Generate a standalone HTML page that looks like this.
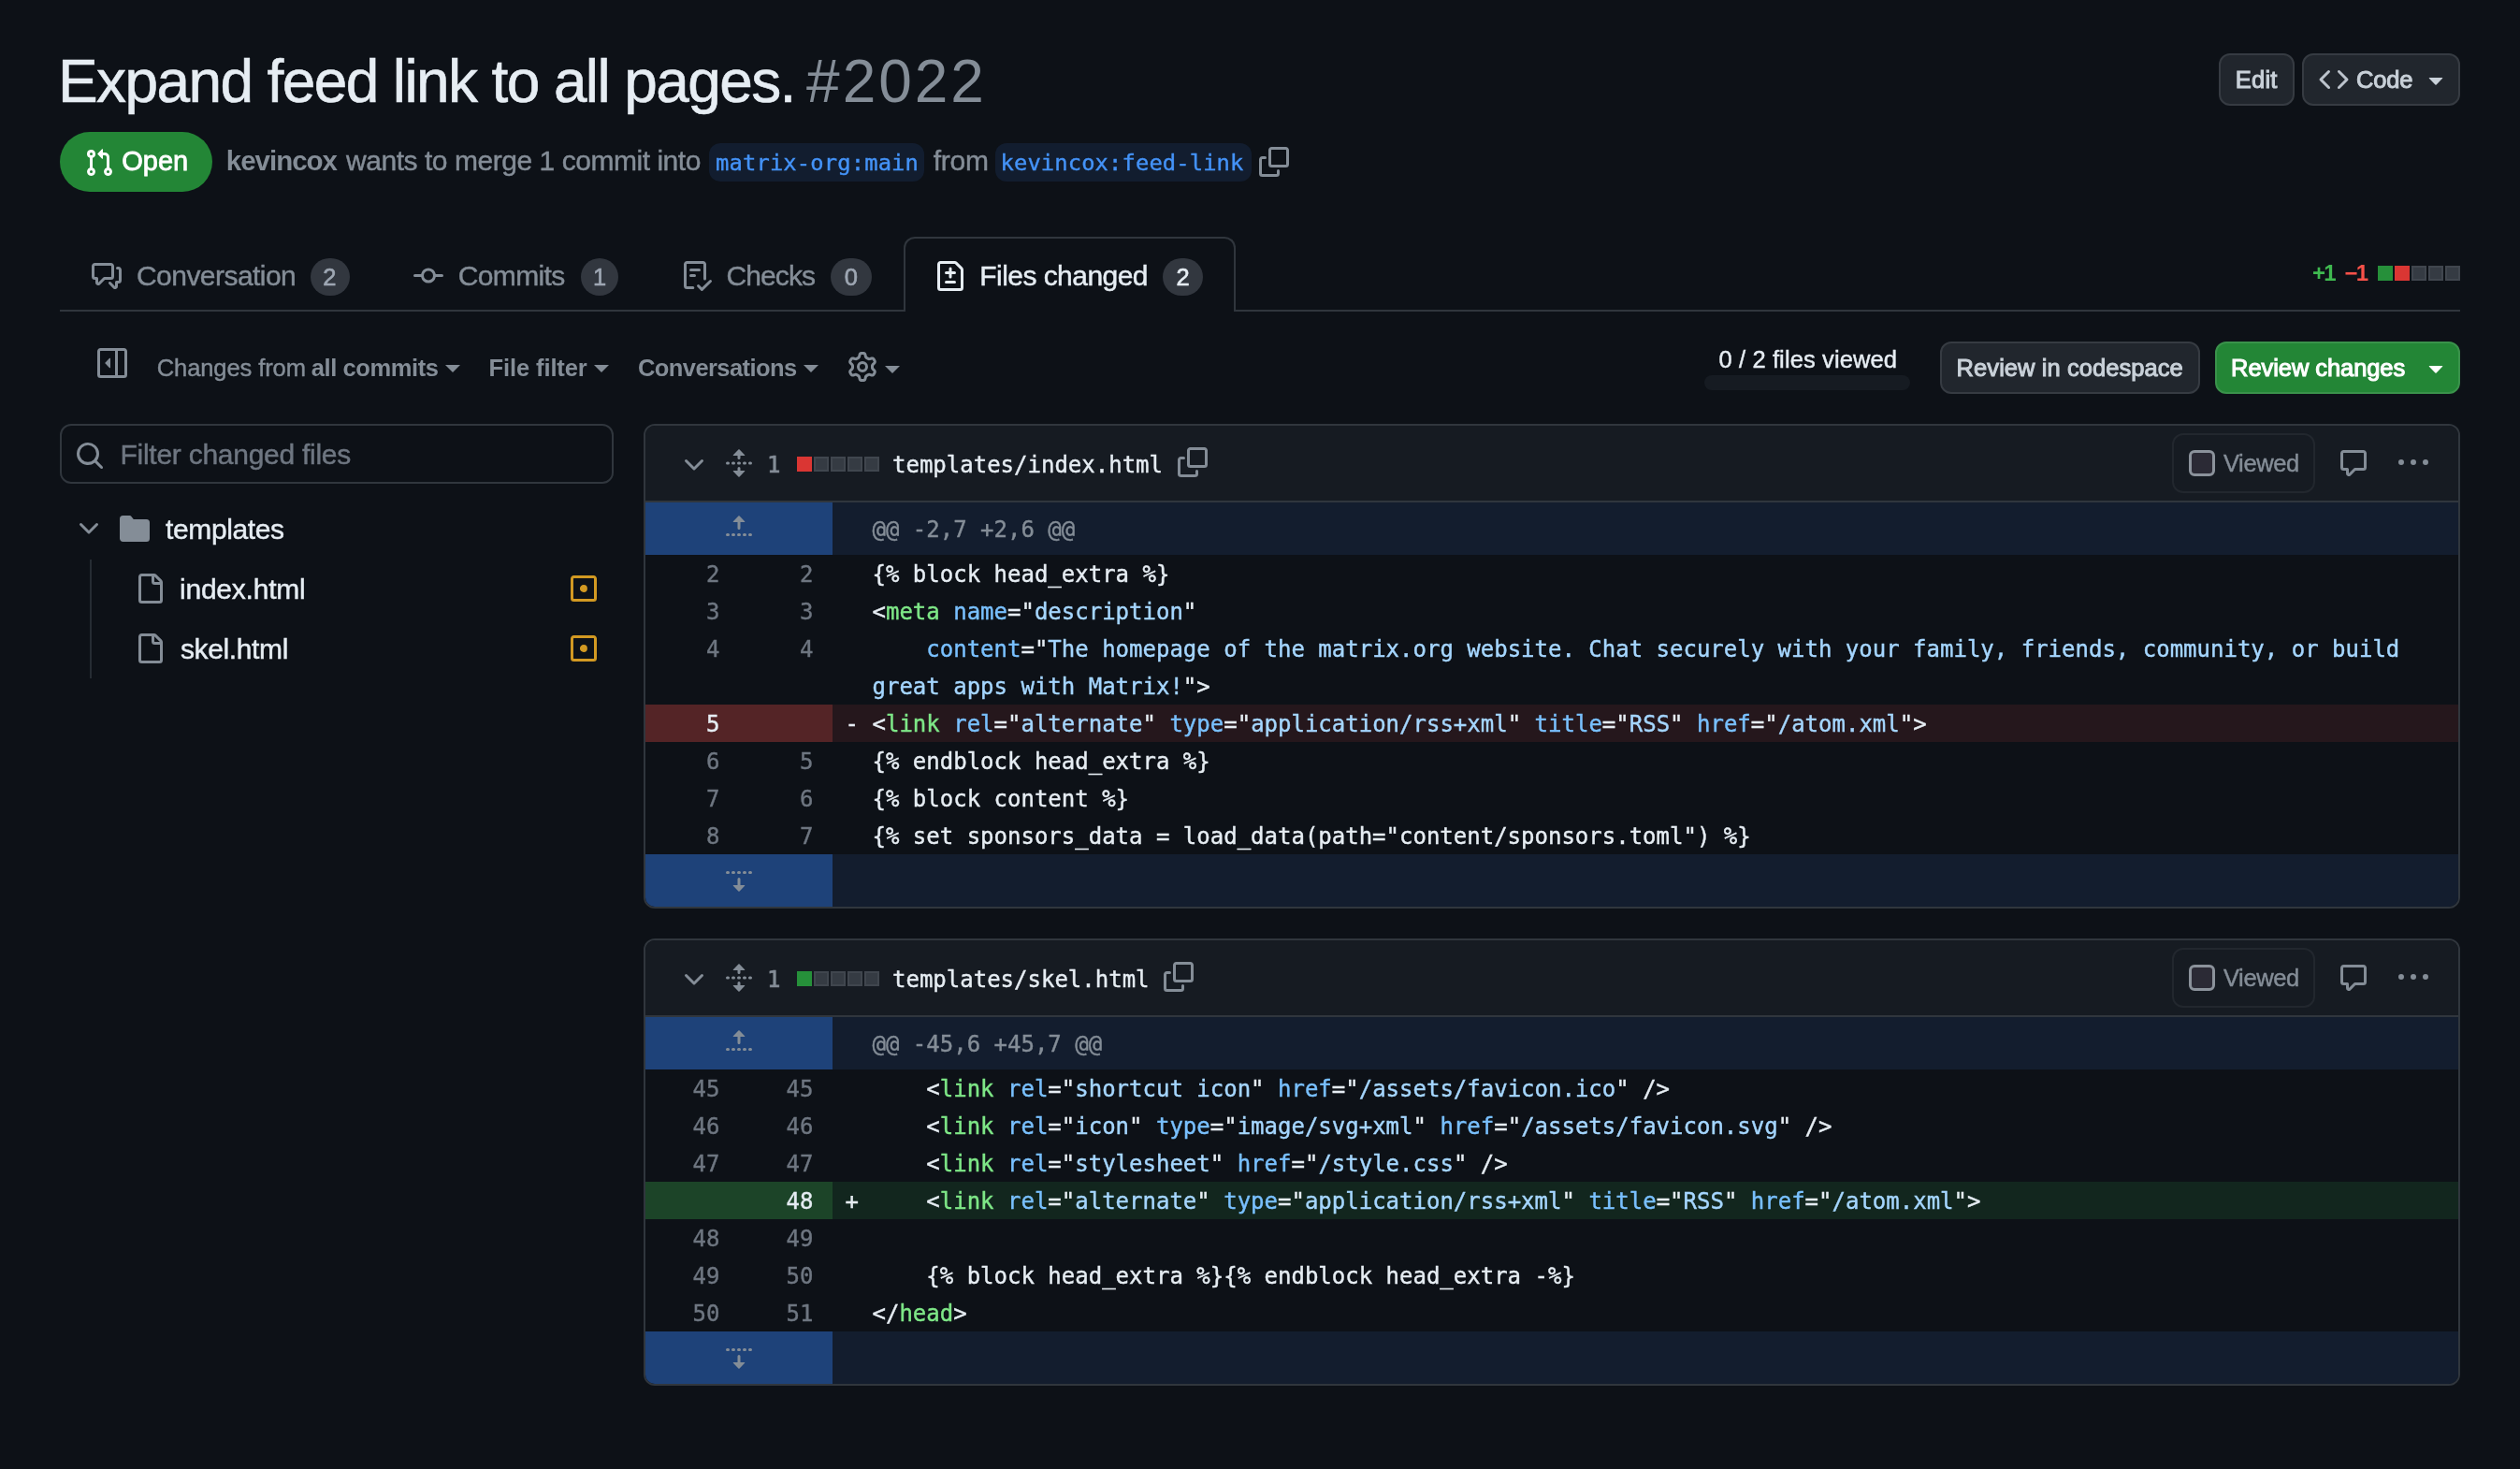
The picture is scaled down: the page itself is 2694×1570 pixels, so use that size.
<!DOCTYPE html>
<html lang="en"><head><meta charset="utf-8"><title>Expand feed link to all pages. #2022</title>
<style>
*{box-sizing:border-box;margin:0;padding:0}
html,body{background:#0d1117;width:2694px;height:1570px;overflow:hidden}
body{font-family:"Liberation Sans",sans-serif;color:#e6edf3}
#root{zoom:2;position:relative;width:1347px;height:785px;overflow:hidden;font-size:14px;line-height:20px;will-change:transform}
.abs{position:absolute}
.tx{position:absolute;white-space:pre;line-height:20px}
.oc{display:block;overflow:visible;flex:none}
.ic{position:absolute;display:block}
.mono{font-family:"DejaVu Sans Mono","Liberation Mono",monospace}
h1{font-weight:400;font-size:inherit}
.btn{position:absolute;height:28px;border:1px solid #363b42;border-radius:6px;background:#21262d}
.btn.green{background:#238636;border-color:#3a924b}
.state{left:32px;top:70.6px;width:81.5px;height:32px;border-radius:16px;background:#238636}
.branch{position:absolute;height:20.6px;background:#121d2f;border-radius:6px}
.tabs{left:32px;top:126.5px;width:1283px;height:40px;box-shadow:inset 0 -1px 0 #30363d}
.tabsel{position:absolute;top:0;height:40px;border:1px solid #30363d;border-bottom:0;border-radius:6px 6px 0 0;background:#0d1117}
.tabsel:after{content:'';position:absolute;left:0;right:0;bottom:-1px;height:1px;background:#0d1117}
.counter{position:absolute;height:20px;border-radius:10px;background:#32373f}
.caret{position:absolute;width:0;height:0;border:4px solid transparent;border-top-color:#848d97;border-bottom-width:0}
.filter{left:32.1px;top:226.5px;width:296px;height:32px;border:1px solid #30363d;border-radius:6px;background:#0d1117}
.file{position:absolute;left:343.75px;width:971.25px;border:1px solid #30363d;border-radius:6px;background:#0d1117;overflow:hidden}
.fh{height:41px;background:#161b22;border-bottom:1px solid #30363d;position:relative}
.fn{position:absolute;font-size:12px;line-height:20px;white-space:pre}
.row{position:relative;height:20px;font-size:12px;line-height:20px;white-space:pre;-webkit-text-stroke:0.2px}
.row.h2{height:40px}
.row.hunk{height:28px;line-height:28px;background:#131d2e}
.row.hunk .nums{position:absolute;left:0;top:0;width:100px;height:100%;background:#1e4279}
.row.hunk .txt{color:#848d97}
.n1,.n2{position:absolute;top:0;width:50px;height:100%;padding-right:10px;padding-top:.5px;text-align:right;color:#6e7681}
.n1{left:0}.n2{left:50px}
.txt{position:absolute;left:121.5px;top:0.5px;color:#e6edf3}
.mk{position:absolute;left:107px;top:0.5px;color:#e6edf3}
.row.del{background:#25171c}.row.del .n1,.row.del .n2{background:#542426;color:#e6edf3}
.row.add{background:#12261e}.row.add .n1,.row.add .n2{background:#1c4428;color:#e6edf3}
.t{color:#7ee787}.a{color:#79c0ff}.s{color:#a5d6ff}
.ds{position:absolute;width:8px;height:8px;background:#353b43;border:1px solid #40464e}
.ds.g{background:#26903a;border:0}.ds.r{background:#da3633;border:0}
</style></head>
<body><div id="root">
<header>
<h1><span class="tx" id="title" style="left:31.00px;top:21.29px;font-size:32px;font-weight:400;color:#e6edf3;letter-spacing:-0.807px;line-height:44px;-webkit-text-stroke:0.3px #e6edf3;">Expand feed link to all pages.</span> <span class="tx" id="tnum" style="left:431.05px;top:21.29px;font-size:32px;font-weight:400;color:#848d97;letter-spacing:1.475px;line-height:44px;-webkit-text-stroke:0.01px #848d97;">#2022</span></h1>
<div class="btn" style="left:1186.2px;top:28.55px;width:40.2px"></div>
<span class="tx" id="b_edit" style="left:1194.90px;top:32.58px;font-size:12.75px;font-weight:400;color:#c9d1d9;letter-spacing:0.100px;-webkit-text-stroke:0.5px #c9d1d9;">Edit</span>
<div class="btn" style="left:1230.65px;top:28.55px;width:84.35px"></div>
<span class="ic" style="left:1239.5px;top:34.7px"><svg class="oc" width="16" height="16" viewBox="0 0 16 16" fill="#bcc3cc" ><path d="m11.28 3.22 4.25 4.25a.75.75 0 0 1 0 1.06l-4.25 4.25a.749.749 0 0 1-1.275-.326.749.749 0 0 1 .215-.734L13.94 8l-3.72-3.72a.749.749 0 0 1 .326-1.275.749.749 0 0 1 .734.215Zm-6.56 0a.751.751 0 0 1 1.042.018.751.751 0 0 1 .018 1.042L2.06 8l3.72 3.72a.749.749 0 0 1-.326 1.275.749.749 0 0 1-.734-.215L.47 8.53a.75.75 0 0 1 0-1.06Z"/></svg></span>
<span class="tx" id="b_code" style="left:1259.50px;top:32.58px;font-size:12.75px;font-weight:400;color:#c9d1d9;letter-spacing:-0.100px;-webkit-text-stroke:0.5px #c9d1d9;">Code</span>
<span class="ic" style="left:1293.8px;top:34.45px"><svg class="oc" width="16" height="16" viewBox="0 0 16 16" fill="#c9d1d9" ><path d="m4.427 7.427 3.396 3.396a.25.25 0 0 0 .354 0l3.396-3.396A.25.25 0 0 0 11.396 7H4.604a.25.25 0 0 0-.177.427Z"/></svg></span>
<div class="abs state"></div>
<span class="ic" style="left:45px;top:78.9px"><svg class="oc" width="16" height="16" viewBox="0 0 16 16" fill="#fff" ><path d="M1.5 3.25a2.25 2.25 0 1 1 3 2.122v5.256a2.251 2.251 0 1 1-1.5 0V5.372A2.25 2.25 0 0 1 1.5 3.25Zm5.677-.177L9.573.677A.25.25 0 0 1 10 .854V2.5h1A2.5 2.5 0 0 1 13.5 5v5.628a2.251 2.251 0 1 1-1.5 0V5a1 1 0 0 0-1-1h-1v1.646a.25.25 0 0 1-.427.177L7.177 3.427a.25.25 0 0 1 0-.354ZM3.75 2.5a.75.75 0 1 0 0 1.5.75.75 0 0 0 0-1.5Zm0 9.5a.75.75 0 1 0 0 1.5.75.75 0 0 0 0-1.5Zm8.25.75a.75.75 0 1 0 1.5 0 .75.75 0 0 0-1.5 0Z"/></svg></span>
<span class="tx" id="s_open" style="left:65.12px;top:75.98px;font-size:14.5px;font-weight:400;color:#fff;letter-spacing:0.000px;-webkit-text-stroke:0.4px #fff;">Open</span>
<span class="tx" id="m_user" style="left:120.88px;top:76.14px;font-size:14.75px;font-weight:700;color:#848d97;letter-spacing:-0.500px;">kevincox</span>
<span class="tx" id="m_w" style="left:185.00px;top:76.05px;font-size:15px;font-weight:400;color:#848d97;letter-spacing:-0.230px;-webkit-text-stroke:0.22px #848d97;">wants to merge 1 commit into</span>
<span class="branch" style="left:379.1px;top:76.5px;width:115px"></span>
<span class="tx mono" id="br1" style="left:382.50px;top:77.03px;font-size:11.9px;font-weight:400;color:#4493f8;letter-spacing:0.071px;-webkit-text-stroke:0.2px #4493f8;">matrix-org:main</span>
<span class="tx" id="m_from" style="left:498.90px;top:76.05px;font-size:15px;font-weight:400;color:#848d97;letter-spacing:-0.133px;-webkit-text-stroke:0.22px #848d97;">from</span>
<span class="branch" style="left:531.85px;top:76.5px;width:137px"></span>
<span class="tx mono" id="br2" style="left:534.75px;top:77.03px;font-size:11.9px;font-weight:400;color:#4493f8;letter-spacing:0.059px;-webkit-text-stroke:0.2px #4493f8;">kevincox:feed-link</span>
<span class="ic" style="left:672.85px;top:78.3px"><svg class="oc" width="16" height="16" viewBox="0 0 16 16" fill="#848d97" ><path d="M0 6.75C0 5.784.784 5 1.75 5h1.5a.75.75 0 0 1 0 1.5h-1.5a.25.25 0 0 0-.25.25v7.5c0 .138.112.25.25.25h7.5a.25.25 0 0 0 .25-.25v-1.5a.75.75 0 0 1 1.5 0v1.5A1.75 1.75 0 0 1 9.25 16h-7.5A1.75 1.75 0 0 1 0 14.25ZM5 1.75C5 .784 5.784 0 6.75 0h7.5C15.216 0 16 .784 16 1.75v7.5A1.75 1.75 0 0 1 14.25 11h-7.5A1.75 1.75 0 0 1 5 9.25Zm1.75-.25a.25.25 0 0 0-.25.25v7.5c0 .138.112.25.25.25h7.5a.25.25 0 0 0 .25-.25v-7.5a.25.25 0 0 0-.25-.25Z"/></svg></span>
</header>
<nav>
<div class="abs tabs"><div class="tabsel" style="left:451px;width:177.25px"></div></div>
<span class="ic" style="left:49px;top:139.5px"><svg class="oc" width="16" height="16" viewBox="0 0 16 16" fill="#848d97" ><path d="M1.75 1h8.5c.966 0 1.75.784 1.75 1.75v5.5A1.75 1.75 0 0 1 10.25 10H7.061l-2.574 2.573A1.458 1.458 0 0 1 2 11.543V10h-.25A1.75 1.75 0 0 1 0 8.25v-5.5C0 1.784.784 1 1.75 1ZM1.5 2.75v5.5c0 .138.112.25.25.25h1a.75.75 0 0 1 .75.75v2.19l2.72-2.72a.749.749 0 0 1 .53-.22h3.5a.25.25 0 0 0 .25-.25v-5.5a.25.25 0 0 0-.25-.25h-8.5a.25.25 0 0 0-.25.25Zm13 2a.25.25 0 0 0-.25-.25h-.5a.75.75 0 0 1 0-1.5h.5c.966 0 1.75.784 1.75 1.75v5.5A1.75 1.75 0 0 1 14.25 12H14v1.543a1.458 1.458 0 0 1-2.487 1.03L9.22 12.28a.749.749 0 0 1 .326-1.275.749.749 0 0 1 .734.215l2.22 2.22v-2.19a.75.75 0 0 1 .75-.75h1a.25.25 0 0 0 .25-.25Z"/></svg></span>
<span class="tx" id="tab1" style="left:73.00px;top:137.45px;font-size:15px;font-weight:400;color:#848d97;letter-spacing:-0.273px;-webkit-text-stroke:0.22px #848d97;">Conversation</span>
<span class="counter" style="left:166.1px;top:138px;width:20.85px"></span>
<span class="tx" id="c1" style="left:172.65px;top:137.78px;font-size:12.75px;font-weight:400;color:#9ea7b3;letter-spacing:0.000px;-webkit-text-stroke:0.3px #9ea7b3;">2</span>
<span class="ic" style="left:221px;top:139.5px"><svg class="oc" width="16" height="16" viewBox="0 0 16 16" fill="#848d97" ><path d="M11.93 8.5a4.002 4.002 0 0 1-7.86 0H.75a.75.75 0 0 1 0-1.5h3.32a4.002 4.002 0 0 1 7.86 0h3.32a.75.75 0 0 1 0 1.5Zm-1.43-.75a2.5 2.5 0 1 0-5 0 2.5 2.5 0 0 0 5 0Z"/></svg></span>
<span class="tx" id="tab2" style="left:244.90px;top:137.45px;font-size:15px;font-weight:400;color:#848d97;letter-spacing:-0.333px;-webkit-text-stroke:0.22px #848d97;">Commits</span>
<span class="counter" style="left:310.3px;top:138px;width:20.1px"></span>
<span class="tx" id="c2" style="left:317.00px;top:137.78px;font-size:12.75px;font-weight:400;color:#9ea7b3;letter-spacing:0.000px;-webkit-text-stroke:0.3px #9ea7b3;">1</span>
<span class="ic" style="left:364.4px;top:139.5px"><svg class="oc" width="16" height="16" viewBox="0 0 16 16" fill="#848d97" ><path d="M2.5 1.75v11.5c0 .138.112.25.25.25h3.17a.75.75 0 0 1 0 1.5H2.75A1.75 1.75 0 0 1 1 13.25V1.75C1 .784 1.784 0 2.75 0h8.5C12.216 0 13 .784 13 1.75v7.736a.75.75 0 0 1-1.5 0V1.75a.25.25 0 0 0-.25-.25h-8.5a.25.25 0 0 0-.25.25Zm13.274 9.537v-.001l-4.557 4.45a.75.75 0 0 1-1.055-.008l-1.943-1.95a.75.75 0 0 1 1.062-1.058l1.419 1.425 4.026-3.932a.75.75 0 1 1 1.048 1.074ZM4.75 4h4.5a.75.75 0 0 1 0 1.5h-4.5a.75.75 0 0 1 0-1.5ZM4 7.75A.75.75 0 0 1 4.75 7h2a.75.75 0 0 1 0 1.5h-2A.75.75 0 0 1 4 7.75Z"/></svg></span>
<span class="tx" id="tab3" style="left:388.30px;top:137.45px;font-size:15px;font-weight:400;color:#848d97;letter-spacing:-0.460px;-webkit-text-stroke:0.22px #848d97;">Checks</span>
<span class="counter" style="left:444.15px;top:138px;width:21.8px"></span>
<span class="tx" id="c3" style="left:451.40px;top:137.78px;font-size:12.75px;font-weight:400;color:#9ea7b3;letter-spacing:0.000px;-webkit-text-stroke:0.3px #9ea7b3;">0</span>
<span class="ic" style="left:500.1px;top:139.5px"><svg class="oc" width="16" height="16" viewBox="0 0 16 16" fill="#e6edf3" ><path d="M1 1.75C1 .784 1.784 0 2.75 0h7.586c.464 0 .909.184 1.237.513l2.914 2.914c.329.328.513.773.513 1.237v9.586A1.75 1.75 0 0 1 13.25 16H2.75A1.75 1.75 0 0 1 1 14.25Zm1.75-.25a.25.25 0 0 0-.25.25v12.5c0 .138.112.25.25.25h10.5a.25.25 0 0 0 .25-.25V4.664a.25.25 0 0 0-.073-.177l-2.914-2.914a.25.25 0 0 0-.177-.073ZM8 3.25a.75.75 0 0 1 .75.75v1.5h1.5a.75.75 0 0 1 0 1.5h-1.5v1.5a.75.75 0 0 1-1.5 0V7h-1.5a.75.75 0 0 1 0-1.5h1.5V4A.75.75 0 0 1 8 3.25Zm-3 8a.75.75 0 0 1 .75-.75h4.5a.75.75 0 0 1 0 1.5h-4.5a.75.75 0 0 1-.75-.75Z"/></svg></span>
<span class="tx" id="tab4" style="left:523.65px;top:137.45px;font-size:15px;font-weight:400;color:#e6edf3;letter-spacing:-0.275px;-webkit-text-stroke:0.22px #e6edf3;">Files changed</span>
<span class="counter" style="left:621.5px;top:138px;width:21.3px"></span>
<span class="tx" id="c4" style="left:628.70px;top:137.78px;font-size:12.75px;font-weight:400;color:#e6edf3;letter-spacing:0.000px;-webkit-text-stroke:0.3px #e6edf3;">2</span>
<span class="tx" id="ds_p" style="left:1235.95px;top:135.94px;font-size:12px;font-weight:700;color:#3fb950;letter-spacing:-0.800px;">+1</span>
<span class="tx" id="ds_m" style="left:1253.30px;top:135.94px;font-size:12px;font-weight:700;color:#f85149;letter-spacing:-0.900px;">−1</span>
<span class="ds g" style="left:1271px;top:142px"></span><span class="ds r" style="left:1280px;top:142px"></span><span class="ds " style="left:1289px;top:142px"></span><span class="ds " style="left:1298px;top:142px"></span><span class="ds " style="left:1307px;top:142px"></span>
</nav>
<section class="toolbar">
<span class="ic" style="left:52px;top:186px"><svg class="oc" width="16" height="16" viewBox="0 0 16 16" fill="#848d97" ><path d="m4.177 7.823 2.396-2.396A.25.25 0 0 1 7 5.604v4.792a.25.25 0 0 1-.427.177L4.177 8.177a.25.25 0 0 1 0-.354ZM0 1.75C0 .784.784 0 1.75 0h12.5C15.216 0 16 .784 16 1.75v12.5A1.75 1.75 0 0 1 14.25 16H1.75A1.75 1.75 0 0 1 0 14.25Zm1.75-.25a.25.25 0 0 0-.25.25v12.5c0 .138.112.25.25.25H9.5v-13Zm12.5 13a.25.25 0 0 0 .25-.25V1.75a.25.25 0 0 0-.25-.25H11v13Z"/></svg></span>
<span class="tx" id="tb1a" style="left:83.88px;top:186.58px;font-size:12.75px;font-weight:400;color:#848d97;letter-spacing:-0.045px;-webkit-text-stroke:0.22px #848d97;">Changes from</span>
<span class="tx" id="tb1b" style="left:166.38px;top:186.58px;font-size:12.75px;font-weight:700;color:#848d97;letter-spacing:-0.200px;">all commits</span>
<span class="caret" style="left:238.1px;top:195px;border-top-color:#848d97"></span>
<span class="tx" id="tb2" style="left:261.25px;top:186.58px;font-size:12.75px;font-weight:700;color:#848d97;letter-spacing:-0.050px;">File filter</span>
<span class="caret" style="left:317.5px;top:195px;border-top-color:#848d97"></span>
<span class="tx" id="tb3" style="left:341.00px;top:186.58px;font-size:12.75px;font-weight:700;color:#848d97;letter-spacing:-0.292px;">Conversations</span>
<span class="caret" style="left:429.3px;top:195px;border-top-color:#848d97"></span>
<span class="ic" style="left:453px;top:188px"><svg class="oc" width="16" height="16" viewBox="0 0 16 16" fill="#848d97" ><path d="M8 0a8.2 8.2 0 0 1 .701.031C9.444.095 9.99.645 10.16 1.29l.288 1.107c.018.066.079.158.212.224.231.114.454.243.668.386.123.082.233.09.299.071l1.103-.303c.644-.176 1.392.021 1.82.63.27.385.506.792.704 1.218.315.675.111 1.422-.364 1.891l-.814.806c-.049.048-.098.147-.088.294.016.257.016.515 0 .772-.01.147.038.246.088.294l.814.806c.475.469.679 1.216.364 1.891a7.977 7.977 0 0 1-.704 1.217c-.428.61-1.176.807-1.82.63l-1.102-.302c-.067-.019-.177-.011-.3.071a5.909 5.909 0 0 1-.668.386c-.133.066-.194.158-.211.224l-.29 1.106c-.168.646-.715 1.196-1.458 1.26a8.006 8.006 0 0 1-1.402 0c-.743-.064-1.289-.614-1.458-1.26l-.289-1.106c-.018-.066-.079-.158-.212-.224a5.738 5.738 0 0 1-.668-.386c-.123-.082-.233-.09-.299-.071l-1.103.303c-.644.176-1.392-.021-1.82-.63a8.12 8.12 0 0 1-.704-1.218c-.315-.675-.111-1.422.363-1.891l.815-.806c.05-.048.098-.147.088-.294a6.214 6.214 0 0 1 0-.772c.01-.147-.038-.246-.088-.294l-.815-.806C.635 6.045.431 5.298.746 4.623a7.92 7.92 0 0 1 .704-1.217c.428-.61 1.176-.807 1.82-.63l1.102.302c.067.019.177.011.3-.071.214-.143.437-.272.668-.386.133-.066.194-.158.211-.224l.29-1.106C6.009.645 6.556.095 7.299.03 7.53.01 7.764 0 8 0Zm-.571 1.525c-.036.003-.108.036-.137.146l-.289 1.105c-.147.561-.549.967-.998 1.189-.173.086-.34.183-.5.29-.417.278-.97.423-1.529.27l-1.103-.303c-.109-.03-.175.016-.195.045-.22.312-.412.644-.573.99-.014.031-.021.11.059.19l.815.806c.411.406.562.957.53 1.456a4.709 4.709 0 0 0 0 .582c.032.499-.119 1.05-.53 1.456l-.815.806c-.081.08-.073.159-.059.19.162.346.353.677.573.989.02.03.085.076.195.046l1.102-.303c.56-.153 1.113-.008 1.53.27.161.107.328.204.501.29.447.222.85.629.997 1.189l.289 1.105c.029.109.101.143.137.146a6.6 6.6 0 0 0 1.142 0c.036-.003.108-.036.137-.146l.289-1.105c.147-.561.549-.967.998-1.189.173-.086.34-.183.5-.29.417-.278.97-.423 1.529-.27l1.103.303c.109.029.175-.016.195-.045.22-.313.411-.644.573-.99.014-.031.021-.11-.059-.19l-.815-.806c-.411-.406-.562-.957-.53-1.456a4.709 4.709 0 0 0 0-.582c-.032-.499.119-1.05.53-1.456l.815-.806c.081-.08.073-.159.059-.19a6.464 6.464 0 0 0-.573-.989c-.02-.03-.085-.076-.195-.046l-1.102.303c-.56.153-1.113.008-1.53-.27a4.44 4.44 0 0 0-.501-.29c-.447-.222-.85-.629-.997-1.189l-.289-1.105c-.029-.11-.101-.143-.137-.146a6.6 6.6 0 0 0-1.142 0ZM11 8a3 3 0 1 1-6 0 3 3 0 0 1 6 0ZM9.5 8a1.5 1.5 0 1 0-3.001.001A1.5 1.5 0 0 0 9.5 8Z"/></svg></span>
<span class="caret" style="left:472.8px;top:195.7px;border-top-color:#848d97"></span>
<span class="tx" id="fv" style="left:918.75px;top:181.93px;font-size:12.75px;font-weight:400;color:#e6edf3;letter-spacing:0.059px;-webkit-text-stroke:0.22px #e6edf3;">0 / 2 files viewed</span>
<div class="abs" style="left:911.1px;top:200.6px;width:109.7px;height:7.7px;border-radius:4px;background:#161b22"></div>
<div class="btn" style="left:1037px;top:182.7px;width:138.9px;height:27.6px"></div>
<span class="tx" id="b_rc" style="left:1045.80px;top:186.53px;font-size:12.75px;font-weight:400;color:#c9d1d9;letter-spacing:0.033px;-webkit-text-stroke:0.5px #c9d1d9;">Review in codespace</span>
<div class="btn green" style="left:1183.75px;top:182.7px;width:131.25px;height:27.6px"></div>
<span class="tx" id="b_rv" style="left:1192.55px;top:186.53px;font-size:12.75px;font-weight:400;color:#fff;letter-spacing:-0.038px;-webkit-text-stroke:0.55px #fff;">Review changes</span>
<span class="ic" style="left:1294px;top:188.7px"><svg class="oc" width="16" height="16" viewBox="0 0 16 16" fill="#fff" ><path d="m4.427 7.427 3.396 3.396a.25.25 0 0 0 .354 0l3.396-3.396A.25.25 0 0 0 11.396 7H4.604a.25.25 0 0 0-.177.427Z"/></svg></span>
</section>
<aside>
<div class="abs filter"></div>
<span class="ic" style="left:40px;top:235.5px"><svg class="oc" width="16" height="16" viewBox="0 0 16 16" fill="#848d97" ><path d="M10.68 11.74a6 6 0 0 1-7.922-8.982 6 6 0 0 1 8.982 7.922l3.04 3.04a.749.749 0 0 1-.326 1.275.749.749 0 0 1-.734-.215ZM11.5 7a4.499 4.499 0 1 0-8.997 0A4.499 4.499 0 0 0 11.5 7Z"/></svg></span>
<span class="tx" id="flt" style="left:64.25px;top:232.93px;font-size:15px;font-weight:400;color:#6e7681;letter-spacing:-0.132px;-webkit-text-stroke:0.22px #6e7681;">Filter changed files</span>
<span class="ic" style="left:39.65px;top:274.5px"><svg class="oc" width="16" height="16" viewBox="0 0 16 16" fill="#848d97" ><path d="M12.78 5.22a.749.749 0 0 1 0 1.06l-4.25 4.25a.749.749 0 0 1-1.06 0L3.22 6.28a.749.749 0 1 1 1.06-1.06L8 8.939l3.72-3.719a.749.749 0 0 1 1.06 0Z"/></svg></span>
<span class="ic" style="left:64px;top:274.6px"><svg class="oc" width="16" height="16" viewBox="0 0 16 16" fill="#848d97" ><path d="M1.75 1A1.75 1.75 0 0 0 0 2.75v10.5C0 14.216.784 15 1.75 15h12.5A1.75 1.75 0 0 0 16 13.25v-8.5A1.75 1.75 0 0 0 14.25 3H7.5a.25.25 0 0 1-.2-.1l-.9-1.2C6.07 1.26 5.55 1 5 1H1.75Z"/></svg></span>
<span class="tx" id="tr1" style="left:88.50px;top:272.93px;font-size:15px;font-weight:400;color:#e6edf3;letter-spacing:-0.188px;-webkit-text-stroke:0.22px #e6edf3;">templates</span>
<div class="abs" style="left:48px;top:298.75px;width:1px;height:63.5px;background:#262c33"></div>
<span class="ic" style="left:72px;top:306.5px"><svg class="oc" width="16" height="16" viewBox="0 0 16 16" fill="#848d97" ><path d="M2 1.75C2 .784 2.784 0 3.75 0h6.586c.464 0 .909.184 1.237.513l2.914 2.914c.329.328.513.773.513 1.237v9.586A1.75 1.75 0 0 1 13.25 16h-9.5A1.75 1.75 0 0 1 2 14.25Zm1.75-.25a.25.25 0 0 0-.25.25v12.5c0 .138.112.25.25.25h9.5a.25.25 0 0 0 .25-.25V6h-2.75A1.75 1.75 0 0 1 9 4.25V1.5Zm6.75.062V4.25c0 .138.112.25.25.25h2.688l-.011-.013-2.914-2.914-.013-.011Z"/></svg></span>
<span class="ic" style="left:304px;top:306.5px"><svg class="oc" width="16" height="16" viewBox="0 0 16 16" fill="#d29922" ><path d="M13.25 1c.966 0 1.75.784 1.75 1.75v10.5A1.75 1.75 0 0 1 13.25 15H2.75A1.75 1.75 0 0 1 1 13.25V2.75C1 1.784 1.784 1 2.75 1ZM2.75 2.5a.25.25 0 0 0-.25.25v10.5c0 .138.112.25.25.25h10.5a.25.25 0 0 0 .25-.25V2.75a.25.25 0 0 0-.25-.25ZM8 10a2 2 0 1 1-.001-3.999A2 2 0 0 1 8 10Z"/></svg></span>
<span class="tx" id="tr2" style="left:96.00px;top:304.80px;font-size:15px;font-weight:400;color:#e6edf3;letter-spacing:-0.111px;-webkit-text-stroke:0.22px #e6edf3;">index.html</span>
<span class="ic" style="left:72px;top:338.5px"><svg class="oc" width="16" height="16" viewBox="0 0 16 16" fill="#848d97" ><path d="M2 1.75C2 .784 2.784 0 3.75 0h6.586c.464 0 .909.184 1.237.513l2.914 2.914c.329.328.513.773.513 1.237v9.586A1.75 1.75 0 0 1 13.25 16h-9.5A1.75 1.75 0 0 1 2 14.25Zm1.75-.25a.25.25 0 0 0-.25.25v12.5c0 .138.112.25.25.25h9.5a.25.25 0 0 0 .25-.25V6h-2.75A1.75 1.75 0 0 1 9 4.25V1.5Zm6.75.062V4.25c0 .138.112.25.25.25h2.688l-.011-.013-2.914-2.914-.013-.011Z"/></svg></span>
<span class="ic" style="left:304px;top:338.5px"><svg class="oc" width="16" height="16" viewBox="0 0 16 16" fill="#d29922" ><path d="M13.25 1c.966 0 1.75.784 1.75 1.75v10.5A1.75 1.75 0 0 1 13.25 15H2.75A1.75 1.75 0 0 1 1 13.25V2.75C1 1.784 1.784 1 2.75 1ZM2.75 2.5a.25.25 0 0 0-.25.25v10.5c0 .138.112.25.25.25h10.5a.25.25 0 0 0 .25-.25V2.75a.25.25 0 0 0-.25-.25ZM8 10a2 2 0 1 1-.001-3.999A2 2 0 0 1 8 10Z"/></svg></span>
<span class="tx" id="tr3" style="left:96.50px;top:336.80px;font-size:15px;font-weight:400;color:#e6edf3;letter-spacing:-0.188px;-webkit-text-stroke:0.22px #e6edf3;">skel.html</span>
</aside>
<main>
<div class="file mono" style="top:226.5px">
<div class="fh"><span class="ic" style="left:18.05px;top:13.1px"><svg class="oc" width="16" height="16" viewBox="0 0 16 16" fill="#848d97" ><path d="M12.78 5.22a.749.749 0 0 1 0 1.06l-4.25 4.25a.749.749 0 0 1-1.06 0L3.22 6.28a.749.749 0 1 1 1.06-1.06L8 8.939l3.72-3.719a.749.749 0 0 1 1.06 0Z"/></svg></span><span class="ic" style="left:42.4px;top:11.8px"><svg class="oc" width="16" height="16" viewBox="0 0 16 16" fill="#848d97" ><path d="m8.177.677 2.896 2.896a.25.25 0 0 1-.177.427H8.75v1.25a.75.75 0 0 1-1.5 0V4H5.104a.25.25 0 0 1-.177-.427L7.823.677a.25.25 0 0 1 .354 0ZM7.25 10.75a.75.75 0 0 1 1.5 0V12h2.146a.25.25 0 0 1 .177.427l-2.896 2.896a.25.25 0 0 1-.354 0l-2.896-2.896A.25.25 0 0 1 5.104 12H7.25v-1.25Zm-5-2a.75.75 0 0 0 0-1.5h-.5a.75.75 0 0 0 0 1.5h.5ZM6 8a.75.75 0 0 1-.75.75h-.5a.75.75 0 0 1 0-1.5h.5A.75.75 0 0 1 6 8Zm2.25.75a.75.75 0 0 0 0-1.5h-.5a.75.75 0 0 0 0 1.5h.5ZM12 8a.75.75 0 0 1-.75.75h-.5a.75.75 0 0 1 0-1.5h.5A.75.75 0 0 1 12 8Zm2.25.75a.75.75 0 0 0 0-1.5h-.5a.75.75 0 0 0 0 1.5h.5Z"/></svg></span><span class="fn mono" style="left:65.25px;top:10.8px;color:#848d97;-webkit-text-stroke:0.3px">1</span><span class="ds r" style="left:81.25px;top:16.4px"></span><span class="ds " style="left:90.25px;top:16.4px"></span><span class="ds " style="left:99.25px;top:16.4px"></span><span class="ds " style="left:108.25px;top:16.4px"></span><span class="ds " style="left:117.25px;top:16.4px"></span><span class="fn mono" style="left:132.25px;top:10.9px;color:#e6edf3;-webkit-text-stroke:0.2px">templates/index.html</span><span class="ic" style="left:284.5px;top:11.4px"><svg class="oc" width="16" height="16" viewBox="0 0 16 16" fill="#848d97" ><path d="M0 6.75C0 5.784.784 5 1.75 5h1.5a.75.75 0 0 1 0 1.5h-1.5a.25.25 0 0 0-.25.25v7.5c0 .138.112.25.25.25h7.5a.25.25 0 0 0 .25-.25v-1.5a.75.75 0 0 1 1.5 0v1.5A1.75 1.75 0 0 1 9.25 16h-7.5A1.75 1.75 0 0 1 0 14.25ZM5 1.75C5 .784 5.784 0 6.75 0h7.5C15.216 0 16 .784 16 1.75v7.5A1.75 1.75 0 0 1 14.25 11h-7.5A1.75 1.75 0 0 1 5 9.25Zm1.75-.25a.25.25 0 0 0-.25.25v7.5c0 .138.112.25.25.25h7.5a.25.25 0 0 0 .25-.25v-7.5a.25.25 0 0 0-.25-.25Z"/></svg></span><span class="abs" style="left:816px;top:4.2px;width:76.6px;height:31.7px;border:1px solid #22272e;border-radius:6px"></span><span class="abs" style="left:825.25px;top:13px;width:14px;height:14px;border:1.8px solid #8b929b;border-radius:3px;background:#2b2a35"></span><span class="ic" style="left:905.25px;top:12px"><svg class="oc" width="16" height="16" viewBox="0 0 16 16" fill="#848d97" ><path d="M1 2.75C1 1.784 1.784 1 2.75 1h10.5c.966 0 1.75.784 1.75 1.75v7.5A1.75 1.75 0 0 1 13.25 12H9.06l-2.573 2.573A1.458 1.458 0 0 1 4 13.543V12H2.75A1.75 1.75 0 0 1 1 10.25Zm1.75-.25a.25.25 0 0 0-.25.25v7.5c0 .138.112.25.25.25h2a.75.75 0 0 1 .75.75v2.19l2.72-2.72a.749.749 0 0 1 .53-.22h4.5a.25.25 0 0 0 .25-.25v-7.5a.25.25 0 0 0-.25-.25Z"/></svg></span><span class="ic" style="left:937.25px;top:12px"><svg class="oc" width="16" height="16" viewBox="0 0 16 16" fill="#848d97" ><path d="M8 9a1.5 1.5 0 1 0 0-3 1.5 1.5 0 0 0 0 3ZM1.5 9a1.5 1.5 0 1 0 0-3 1.5 1.5 0 0 0 0 3Zm13 0a1.5 1.5 0 1 0 0-3 1.5 1.5 0 0 0 0 3Z"/></svg></span></div>
<div class="row hunk"><span class="nums"><span class="ic" style="left:42.2px;top:5.5px"><svg class="oc" width="16" height="16" viewBox="0 0 16 16" fill="#848d97" ><path d="M7.823 1.677 4.927 4.573A.25.25 0 0 0 5.104 5H7.25v3.236a.75.75 0 1 0 1.5 0V5h2.146a.25.25 0 0 0 .177-.427L8.177 1.677a.25.25 0 0 0-.354 0ZM13.75 11a.75.75 0 0 0 0 1.5h.5a.75.75 0 0 0 0-1.5h-.5Zm-3.75.75a.75.75 0 0 1 .75-.75h.5a.75.75 0 0 1 0 1.5h-.5a.75.75 0 0 1-.75-.75ZM7.75 11a.75.75 0 0 0 0 1.5h.5a.75.75 0 0 0 0-1.5h-.5ZM4 11.75a.75.75 0 0 1 .75-.75h.5a.75.75 0 0 1 0 1.5h-.5a.75.75 0 0 1-.75-.75ZM1.75 11a.75.75 0 0 0 0 1.5h.5a.75.75 0 0 0 0-1.5h-.5Z"/></svg></span></span><span class="txt">@@ -2,7 +2,6 @@</span></div>
<div class="row "><span class="n1">2</span><span class="n2">2</span><span class="txt">{% block head_extra %}</span></div>
<div class="row "><span class="n1">3</span><span class="n2">3</span><span class="txt">&lt;<span class="t">meta</span> <span class="a">name</span>="<span class="s">description</span>"</span></div>
<div class="row h2"><span class="n1">4</span><span class="n2">4</span><span class="txt">    <span class="a">content</span>="<span class="s">The homepage of the matrix.org website. Chat securely with your family, friends, community, or build</span><br><span class="s">great apps with Matrix!</span>"&gt;</span></div>
<div class="row del"><span class="n1">5</span><span class="n2"></span><span class="mk">-</span><span class="txt">&lt;<span class="t">link</span> <span class="a">rel</span>="<span class="s">alternate</span>" <span class="a">type</span>="<span class="s">application/rss+xml</span>" <span class="a">title</span>="<span class="s">RSS</span>" <span class="a">href</span>="<span class="s">/atom.xml</span>"&gt;</span></div>
<div class="row "><span class="n1">6</span><span class="n2">5</span><span class="txt">{% endblock head_extra %}</span></div>
<div class="row "><span class="n1">7</span><span class="n2">6</span><span class="txt">{% block content %}</span></div>
<div class="row "><span class="n1">8</span><span class="n2">7</span><span class="txt">{% set sponsors_data = load_data(path="content/sponsors.toml") %}</span></div>
<div class="row hunk"><span class="nums"><span class="ic" style="left:42.2px;top:5.5px"><svg class="oc" width="16" height="16" viewBox="0 0 16 16" fill="#848d97" ><path d="m8.177 14.323 2.896-2.896a.25.25 0 0 0-.177-.427H8.75V7.764a.75.75 0 1 0-1.5 0V11H5.104a.25.25 0 0 0-.177.427l2.896 2.896a.25.25 0 0 0 .354 0ZM2.25 5a.75.75 0 0 0 0-1.5h-.5a.75.75 0 0 0 0 1.5h.5ZM6 4.25a.75.75 0 0 1-.75.75h-.5a.75.75 0 0 1 0-1.5h.5a.75.75 0 0 1 .75.75ZM8.25 5a.75.75 0 0 0 0-1.5h-.5a.75.75 0 0 0 0 1.5h.5ZM12 4.25a.75.75 0 0 1-.75.75h-.5a.75.75 0 0 1 0-1.5h.5a.75.75 0 0 1 .75.75Zm2.25.75a.75.75 0 0 0 0-1.5h-.5a.75.75 0 0 0 0 1.5h.5Z"/></svg></span></span><span class="txt"></span></div>
</div>
<span class="tx" id="vw1" style="left:1188.45px;top:237.53px;font-size:12.75px;font-weight:400;color:#848d97;letter-spacing:-0.180px;-webkit-text-stroke:0.22px #848d97;">Viewed</span>
<div class="file mono" style="top:501.5px">
<div class="fh"><span class="ic" style="left:18.05px;top:13.1px"><svg class="oc" width="16" height="16" viewBox="0 0 16 16" fill="#848d97" ><path d="M12.78 5.22a.749.749 0 0 1 0 1.06l-4.25 4.25a.749.749 0 0 1-1.06 0L3.22 6.28a.749.749 0 1 1 1.06-1.06L8 8.939l3.72-3.719a.749.749 0 0 1 1.06 0Z"/></svg></span><span class="ic" style="left:42.4px;top:11.8px"><svg class="oc" width="16" height="16" viewBox="0 0 16 16" fill="#848d97" ><path d="m8.177.677 2.896 2.896a.25.25 0 0 1-.177.427H8.75v1.25a.75.75 0 0 1-1.5 0V4H5.104a.25.25 0 0 1-.177-.427L7.823.677a.25.25 0 0 1 .354 0ZM7.25 10.75a.75.75 0 0 1 1.5 0V12h2.146a.25.25 0 0 1 .177.427l-2.896 2.896a.25.25 0 0 1-.354 0l-2.896-2.896A.25.25 0 0 1 5.104 12H7.25v-1.25Zm-5-2a.75.75 0 0 0 0-1.5h-.5a.75.75 0 0 0 0 1.5h.5ZM6 8a.75.75 0 0 1-.75.75h-.5a.75.75 0 0 1 0-1.5h.5A.75.75 0 0 1 6 8Zm2.25.75a.75.75 0 0 0 0-1.5h-.5a.75.75 0 0 0 0 1.5h.5ZM12 8a.75.75 0 0 1-.75.75h-.5a.75.75 0 0 1 0-1.5h.5A.75.75 0 0 1 12 8Zm2.25.75a.75.75 0 0 0 0-1.5h-.5a.75.75 0 0 0 0 1.5h.5Z"/></svg></span><span class="fn mono" style="left:65.25px;top:10.8px;color:#848d97;-webkit-text-stroke:0.3px">1</span><span class="ds g" style="left:81.25px;top:16.4px"></span><span class="ds " style="left:90.25px;top:16.4px"></span><span class="ds " style="left:99.25px;top:16.4px"></span><span class="ds " style="left:108.25px;top:16.4px"></span><span class="ds " style="left:117.25px;top:16.4px"></span><span class="fn mono" style="left:132.25px;top:10.9px;color:#e6edf3;-webkit-text-stroke:0.2px">templates/skel.html</span><span class="ic" style="left:277.3px;top:11.4px"><svg class="oc" width="16" height="16" viewBox="0 0 16 16" fill="#848d97" ><path d="M0 6.75C0 5.784.784 5 1.75 5h1.5a.75.75 0 0 1 0 1.5h-1.5a.25.25 0 0 0-.25.25v7.5c0 .138.112.25.25.25h7.5a.25.25 0 0 0 .25-.25v-1.5a.75.75 0 0 1 1.5 0v1.5A1.75 1.75 0 0 1 9.25 16h-7.5A1.75 1.75 0 0 1 0 14.25ZM5 1.75C5 .784 5.784 0 6.75 0h7.5C15.216 0 16 .784 16 1.75v7.5A1.75 1.75 0 0 1 14.25 11h-7.5A1.75 1.75 0 0 1 5 9.25Zm1.75-.25a.25.25 0 0 0-.25.25v7.5c0 .138.112.25.25.25h7.5a.25.25 0 0 0 .25-.25v-7.5a.25.25 0 0 0-.25-.25Z"/></svg></span><span class="abs" style="left:816px;top:4.2px;width:76.6px;height:31.7px;border:1px solid #22272e;border-radius:6px"></span><span class="abs" style="left:825.25px;top:13px;width:14px;height:14px;border:1.8px solid #8b929b;border-radius:3px;background:#2b2a35"></span><span class="ic" style="left:905.25px;top:12px"><svg class="oc" width="16" height="16" viewBox="0 0 16 16" fill="#848d97" ><path d="M1 2.75C1 1.784 1.784 1 2.75 1h10.5c.966 0 1.75.784 1.75 1.75v7.5A1.75 1.75 0 0 1 13.25 12H9.06l-2.573 2.573A1.458 1.458 0 0 1 4 13.543V12H2.75A1.75 1.75 0 0 1 1 10.25Zm1.75-.25a.25.25 0 0 0-.25.25v7.5c0 .138.112.25.25.25h2a.75.75 0 0 1 .75.75v2.19l2.72-2.72a.749.749 0 0 1 .53-.22h4.5a.25.25 0 0 0 .25-.25v-7.5a.25.25 0 0 0-.25-.25Z"/></svg></span><span class="ic" style="left:937.25px;top:12px"><svg class="oc" width="16" height="16" viewBox="0 0 16 16" fill="#848d97" ><path d="M8 9a1.5 1.5 0 1 0 0-3 1.5 1.5 0 0 0 0 3ZM1.5 9a1.5 1.5 0 1 0 0-3 1.5 1.5 0 0 0 0 3Zm13 0a1.5 1.5 0 1 0 0-3 1.5 1.5 0 0 0 0 3Z"/></svg></span></div>
<div class="row hunk"><span class="nums"><span class="ic" style="left:42.2px;top:5.5px"><svg class="oc" width="16" height="16" viewBox="0 0 16 16" fill="#848d97" ><path d="M7.823 1.677 4.927 4.573A.25.25 0 0 0 5.104 5H7.25v3.236a.75.75 0 1 0 1.5 0V5h2.146a.25.25 0 0 0 .177-.427L8.177 1.677a.25.25 0 0 0-.354 0ZM13.75 11a.75.75 0 0 0 0 1.5h.5a.75.75 0 0 0 0-1.5h-.5Zm-3.75.75a.75.75 0 0 1 .75-.75h.5a.75.75 0 0 1 0 1.5h-.5a.75.75 0 0 1-.75-.75ZM7.75 11a.75.75 0 0 0 0 1.5h.5a.75.75 0 0 0 0-1.5h-.5ZM4 11.75a.75.75 0 0 1 .75-.75h.5a.75.75 0 0 1 0 1.5h-.5a.75.75 0 0 1-.75-.75ZM1.75 11a.75.75 0 0 0 0 1.5h.5a.75.75 0 0 0 0-1.5h-.5Z"/></svg></span></span><span class="txt">@@ -45,6 +45,7 @@</span></div>
<div class="row "><span class="n1">45</span><span class="n2">45</span><span class="txt">    &lt;<span class="t">link</span> <span class="a">rel</span>="<span class="s">shortcut icon</span>" <span class="a">href</span>="<span class="s">/assets/favicon.ico</span>" /&gt;</span></div>
<div class="row "><span class="n1">46</span><span class="n2">46</span><span class="txt">    &lt;<span class="t">link</span> <span class="a">rel</span>="<span class="s">icon</span>" <span class="a">type</span>="<span class="s">image/svg+xml</span>" <span class="a">href</span>="<span class="s">/assets/favicon.svg</span>" /&gt;</span></div>
<div class="row "><span class="n1">47</span><span class="n2">47</span><span class="txt">    &lt;<span class="t">link</span> <span class="a">rel</span>="<span class="s">stylesheet</span>" <span class="a">href</span>="<span class="s">/style.css</span>" /&gt;</span></div>
<div class="row add"><span class="n1"></span><span class="n2">48</span><span class="mk">+</span><span class="txt">    &lt;<span class="t">link</span> <span class="a">rel</span>="<span class="s">alternate</span>" <span class="a">type</span>="<span class="s">application/rss+xml</span>" <span class="a">title</span>="<span class="s">RSS</span>" <span class="a">href</span>="<span class="s">/atom.xml</span>"&gt;</span></div>
<div class="row "><span class="n1">48</span><span class="n2">49</span><span class="txt"></span></div>
<div class="row "><span class="n1">49</span><span class="n2">50</span><span class="txt">    {% block head_extra %}{% endblock head_extra -%}</span></div>
<div class="row "><span class="n1">50</span><span class="n2">51</span><span class="txt">&lt;/<span class="t">head</span>&gt;</span></div>
<div class="row hunk"><span class="nums"><span class="ic" style="left:42.2px;top:5.5px"><svg class="oc" width="16" height="16" viewBox="0 0 16 16" fill="#848d97" ><path d="m8.177 14.323 2.896-2.896a.25.25 0 0 0-.177-.427H8.75V7.764a.75.75 0 1 0-1.5 0V11H5.104a.25.25 0 0 0-.177.427l2.896 2.896a.25.25 0 0 0 .354 0ZM2.25 5a.75.75 0 0 0 0-1.5h-.5a.75.75 0 0 0 0 1.5h.5ZM6 4.25a.75.75 0 0 1-.75.75h-.5a.75.75 0 0 1 0-1.5h.5a.75.75 0 0 1 .75.75ZM8.25 5a.75.75 0 0 0 0-1.5h-.5a.75.75 0 0 0 0 1.5h.5ZM12 4.25a.75.75 0 0 1-.75.75h-.5a.75.75 0 0 1 0-1.5h.5a.75.75 0 0 1 .75.75Zm2.25.75a.75.75 0 0 0 0-1.5h-.5a.75.75 0 0 0 0 1.5h.5Z"/></svg></span></span><span class="txt"></span></div>
</div>
<span class="tx" id="vw2" style="left:1188.45px;top:512.53px;font-size:12.75px;font-weight:400;color:#848d97;letter-spacing:-0.180px;-webkit-text-stroke:0.22px #848d97;">Viewed</span>
</main>
</div></body></html>
